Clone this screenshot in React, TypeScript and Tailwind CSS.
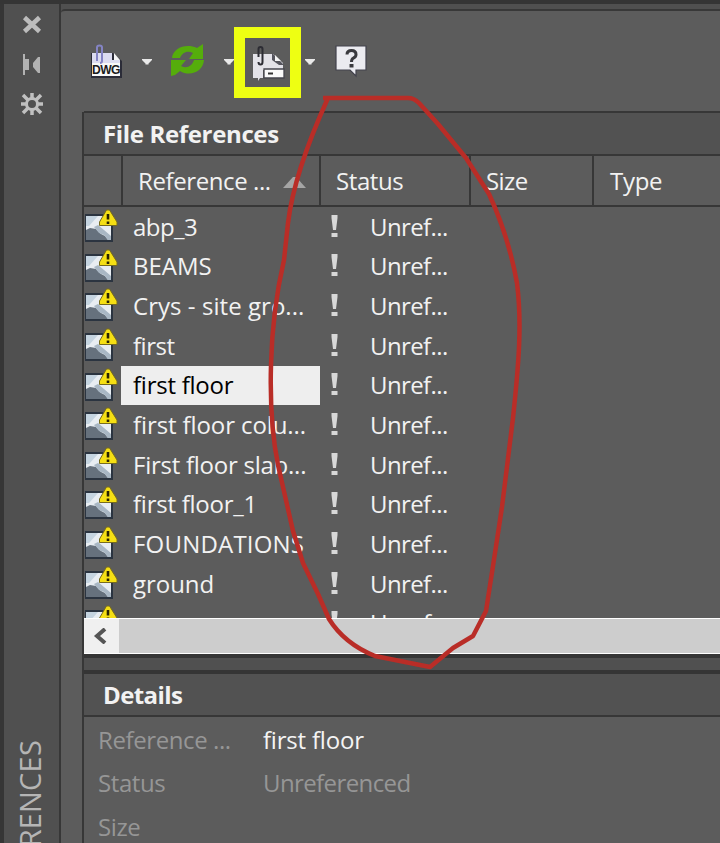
const files = [
  { name: 'abp_3', tracking: 'tracking-[-0.55px]' },
  { name: 'BEAMS', tracking: 'tracking-[0px]' },
  { name: 'Crys - site gro...', tracking: 'tracking-[0.05px]' },
  { name: 'first', tracking: 'tracking-[-0.5px]' },
  { name: 'first floor', tracking: 'tracking-[-0.25px]' },
  { name: 'first floor colu...', tracking: 'tracking-[-0.1px]' },
  { name: 'First floor slab...', tracking: 'tracking-[-0.25px]' },
  { name: 'first floor_1', tracking: 'tracking-[-0.25px]' },
  { name: 'FOUNDATIONS', tracking: 'tracking-[0.2px]' },
  { name: 'ground', tracking: 'tracking-[-0.05px]' },
  { name: '', tracking: '' },
]

const selected = 'first floor'

function DropArrow({ className }: { className: string }) {
  return (
    <svg className={className} width="12" height="8" viewBox="0 0 12 8">
      <path d="M1 1h10v1L7.5 5.5v1h-3v-1L1 2z" fill="#e9e9e9" />
    </svg>
  )
}

function DwgIcon() {
  return (
    <svg width="34" height="36" viewBox="0 0 34 36">
      <path d="M1 10h22l9 8v17H1z" fill="#2b2c38" />
      <path d="M2 10h20v7h8v4H2z" fill="#dcdcf0" />
      <path d="M24 10l6 7h-6z" fill="#f6f6f6" />
      <path d="M2 20h28v13H2z" fill="#f8f8f8" />
      <text x="2" y="31" textLength="28" lengthAdjust="spacingAndGlyphs" fontFamily="Liberation Sans" fontWeight="700" fontSize="13" fill="#1c1c1c">DWG</text>
      <path d="M7 18V4.500q0-2 2.500-2t2.500 2V18q0 2-2 2" fill="none" stroke="#8484c4" strokeWidth="2" />
    </svg>
  )
}

function RefreshIcon() {
  return (
    <svg width="36" height="34" viewBox="0 0 36 34">
      <path d="M2 15C3 5 16 0 27 5l6-4v15H19l4-6C17 7 12 10 10 15z" fill="#55ad0b" />
      <path d="M34 17c-1 12-14 17-24 11l-5 4-4 1V17h15l-5 6c6 3 11 0 13-6z" fill="#55ad0b" />
    </svg>
  )
}

function ChangePathIcon() {
  return (
    <svg width="34" height="38" viewBox="0 0 34 38">
      <path d="M2 10h20l10 9v7H12v8H9l-2 3v-3H2z" fill="#e3e2e8" />
      <path d="M21 9l12 12h-5l-7-5z" fill="#55555d" />
      <path d="M24 11l6 6h-6z" fill="#f5f5f5" />
      <path d="M13 25h20v9H13z" fill="#fafafa" stroke="#45454d" strokeWidth="1.300" />
      <path d="M17 29.500h5" stroke="#333" strokeWidth="2" />
      <path d="M7.500 13V5q0-2 2-2t2 2v13q0 2.500-2 2.500t-2-2.500" fill="none" stroke="#2c2c33" strokeWidth="2" />
    </svg>
  )
}

function HelpIcon() {
  return (
    <svg width="32" height="34" viewBox="0 0 32 34">
      <path d="M1 2h30v24H21v6l-6-6H1z" fill="#ebebf0" stroke="#42424c" strokeWidth="1.200" />
      <path d="M12 10.500q0-4 4.500-4t4.500 4q0 2.500-2.500 3.500-2 1-2 4" fill="none" stroke="#3a3a3e" strokeWidth="3" />
      <path d="M14.500 20h4v3.500h-4z" fill="#3a3a3e" />
    </svg>
  )
}

function FileIcon() {
  return (
    <svg className="shrink-0" width="36" height="36" viewBox="0 0 36 36">
      <path d="M1 7h28v28H1z" fill="#2b3440" />
      <path d="M2 9h25v24H2z" fill="#e8edf2" />
      <path d="M2 9h12L5 19H2z" fill="#c5d4e0" />
      <path d="M2 23l4-2 6 1 5 5 4 2 3 4H2z" fill="#66717d" />
      <path d="M10 20l4-2 6 5 7 6v4h-3l-4-5-5-2z" fill="#a9b7c4" />
      <path d="M22.500 3h3l7.500 12v3.500H15.500V15z" fill="#f5df14" stroke="#766b20" strokeWidth="1" />
      <path d="M24 7v5.500M24 14.500v2.500" stroke="#282200" strokeWidth="2.600" />
    </svg>
  )
}

function Exclamation() {
  return (
    <svg className="shrink-0" width="10" height="26" viewBox="0 0 10 26">
      <path d="M1.500 1h6v3l-1.500 12H3L1.500 4z" fill="#d8d8d8" />
      <path d="M1.500 19h6v4h-6z" fill="#d8d8d8" />
    </svg>
  )
}

function FileRow({ name, tracking }: { name: string; tracking: string }) {
  const isSelected = name === selected
  return (
    <div className="flex h-[39.65px] shrink-0 items-center">
      <div className="flex h-full w-[37px] shrink-0 items-start">
        <FileIcon />
      </div>
      <div
        className={`flex h-full w-[199px] shrink-0 items-center whitespace-nowrap pl-3 ${tracking} ${
          isSelected ? 'bg-[#eeeeee] text-black' : ''
        }`}
      >
        {name}
      </div>
      <div className="flex items-center pl-[10px]">
        <Exclamation />
        <span className="pl-[30px]">Unref...</span>
      </div>
    </div>
  )
}

function SideBar() {
  return (
    <aside className="flex w-[61px] shrink-0 flex-col items-center border-l-4 border-r-2 border-l-[#363636] border-r-[#373737] bg-[#505050] pt-[11px]">
      <svg width="20" height="20" viewBox="0 0 20 20">
        <path d="M2.500 2.500l15 14M17.500 2.500l-15 14" stroke="#bcbcbc" strokeWidth="4.500" />
      </svg>
      <svg className="mt-[18px]" width="20" height="24" viewBox="0 0 20 24">
        <path d="M1 1h2v5h4v11H3v5H1zM18 4v16h-2l-5-6v-4l5-6z" fill="#b2b2b2" />
      </svg>
      <svg className="mt-[15px]" width="24" height="24" viewBox="0 0 24 24">
        <circle cx="12" cy="12" r="5.500" fill="none" stroke="#c0c0c0" strokeWidth="3" />
        <path d="M12 1v5M12 18v5M1 12h5M18 12h5M3 3l5 5M16 16l5 5M21 3l-5 5M8 16l-5 5" stroke="#c0c0c0" strokeWidth="3.500" />
      </svg>
      <div className="mt-auto h-[103px] w-full overflow-hidden">
        <div className="ml-[8px] w-[36px] whitespace-nowrap text-[29px] leading-[36px] tracking-[0.2px] text-[#b5b5b5] [direction:rtl] [writing-mode:sideways-lr]">
          <span className="[direction:ltr] [unicode-bidi:isolate]">EXTERNAL REFERENCES</span>
        </div>
      </div>
    </aside>
  )
}

function Toolbar() {
  return (
    <div className="flex h-[101px] items-start">
      <div className="ml-[29px] mt-[32px]"><DwgIcon /></div>
      <DropArrow className="ml-[17px] mt-[47px]" />
      <div className="ml-[17px] mt-[32px]"><RefreshIcon /></div>
      <DropArrow className="ml-[17px] mt-[47px]" />
      <div className="-ml-px mt-[16px] flex h-[71px] w-[67px] items-center justify-center border-[11px] border-[#eeff12]">
        <ChangePathIcon />
      </div>
      <DropArrow className="ml-[3px] mt-[47px]" />
      <div className="ml-[19px] mt-[33px]"><HelpIcon /></div>
    </div>
  )
}

export default function App() {
  return (
    <div className="relative flex h-[843px] w-[720px] flex-col overflow-hidden border-t-4 border-[#353535] bg-[#505050] font-['Open_Sans','Noto_Sans',sans-serif] text-[24px] leading-none tracking-[-0.6px] text-[#f2f2f2]">
      <div className="flex min-h-0 flex-1">
        <SideBar />
        <main className="mt-[5px] flex min-w-0 flex-1 flex-col rounded-tl border-t-2 border-[#383838] bg-[#5c5c5c]">
          <Toolbar />
          <div className="ml-[21px] flex min-h-0 flex-1 flex-col border-l-2 border-[#373737]">
            <h2 className="-mt-px flex h-[45px] shrink-0 items-center border-y-2 border-[#373737] bg-[#525252] pl-[19px] text-[24px] tracking-[-0.35px] font-bold">
              File References
            </h2>
            <div className="flex h-[51px] shrink-0 items-center border-b-2 border-[#373737]">
              <div className="h-full w-[39px] border-r-2 border-[#373737]" />
              <div className="flex h-full w-[198px] items-center border-r-2 border-[#373737] pl-[15px] tracking-[-0.4px]">
                Reference ...
                <svg className="ml-[12px] mt-1" width="23" height="12" viewBox="0 0 23 12">
                  <path d="M10 0h3l10 11H0z" fill="#a5a5a5" />
                </svg>
              </div>
              <div className="flex h-full w-[150px] items-center border-r-2 border-[#373737] pl-[15px] tracking-[-0.4px]">Status</div>
              <div className="flex h-full w-[123px] items-center border-r-2 border-[#373737] pl-[15px]">Size</div>
              <div className="pl-[16px] tracking-[-0.3px]">Type</div>
            </div>
            <div className="h-[411px] shrink-0 overflow-hidden">
              {files.map((file, i) => (
                <FileRow key={i} name={file.name} tracking={file.tracking} />
              ))}
            </div>
            <div className="flex h-[36px] shrink-0 border-y border-white bg-[#cdcdcd]">
              <div className="flex w-[35px] items-center justify-center bg-[#f0f0f0] pr-1">
                <svg width="14" height="16" viewBox="0 0 14 16">
                  <path d="M12 1L4 8l8 7" fill="none" stroke="#555" strokeWidth="4" />
                </svg>
              </div>
            </div>
            <div className="h-[20px] shrink-0 border-y-4 border-[#353535] bg-[#505050]" />
            <h2 className="flex h-[43px] shrink-0 items-center border-b-2 border-[#373737] bg-[#525252] pl-[19px] text-[24px] font-bold">
              Details
            </h2>
            <dl className="grid grid-cols-[165px_1fr] auto-rows-[43.500px] items-center pl-[14px] pt-[1px] tracking-[-0.4px] text-[#969696]">
              <dt>Reference ...</dt>
              <dd className="tracking-[-0.2px] text-[#f4f4f4]">first floor</dd>
              <dt>Status</dt>
              <dd className="tracking-[-0.6px]">Unreferenced</dd>
              <dt>Size</dt>
              <dd />
            </dl>
          </div>
        </main>
      </div>

      {/* hand-drawn marker around the status column */}
      <svg className="pointer-events-none absolute -top-1 left-0" width="720" height="843" viewBox="0 0 720 843">
        <path
          d="M323 98H408Q414 98 419 103L438 124L466 158L489 194C502 222 511 250 517 283C522 323 519 362 513 418L502 507L493 566L486 611L473 636L453 648L430 667L375 656C355 648 339 635 329 619L318 594L303 563L293 531L278 465C272 435 270 400 271 365C272 325 277 290 284 260L288 223C292 190 303 153 328 98"
          fill="none"
          stroke="#b92d27"
          strokeWidth="4.500"
          strokeLinejoin="round"
        />
      </svg>
    </div>
  )
}
